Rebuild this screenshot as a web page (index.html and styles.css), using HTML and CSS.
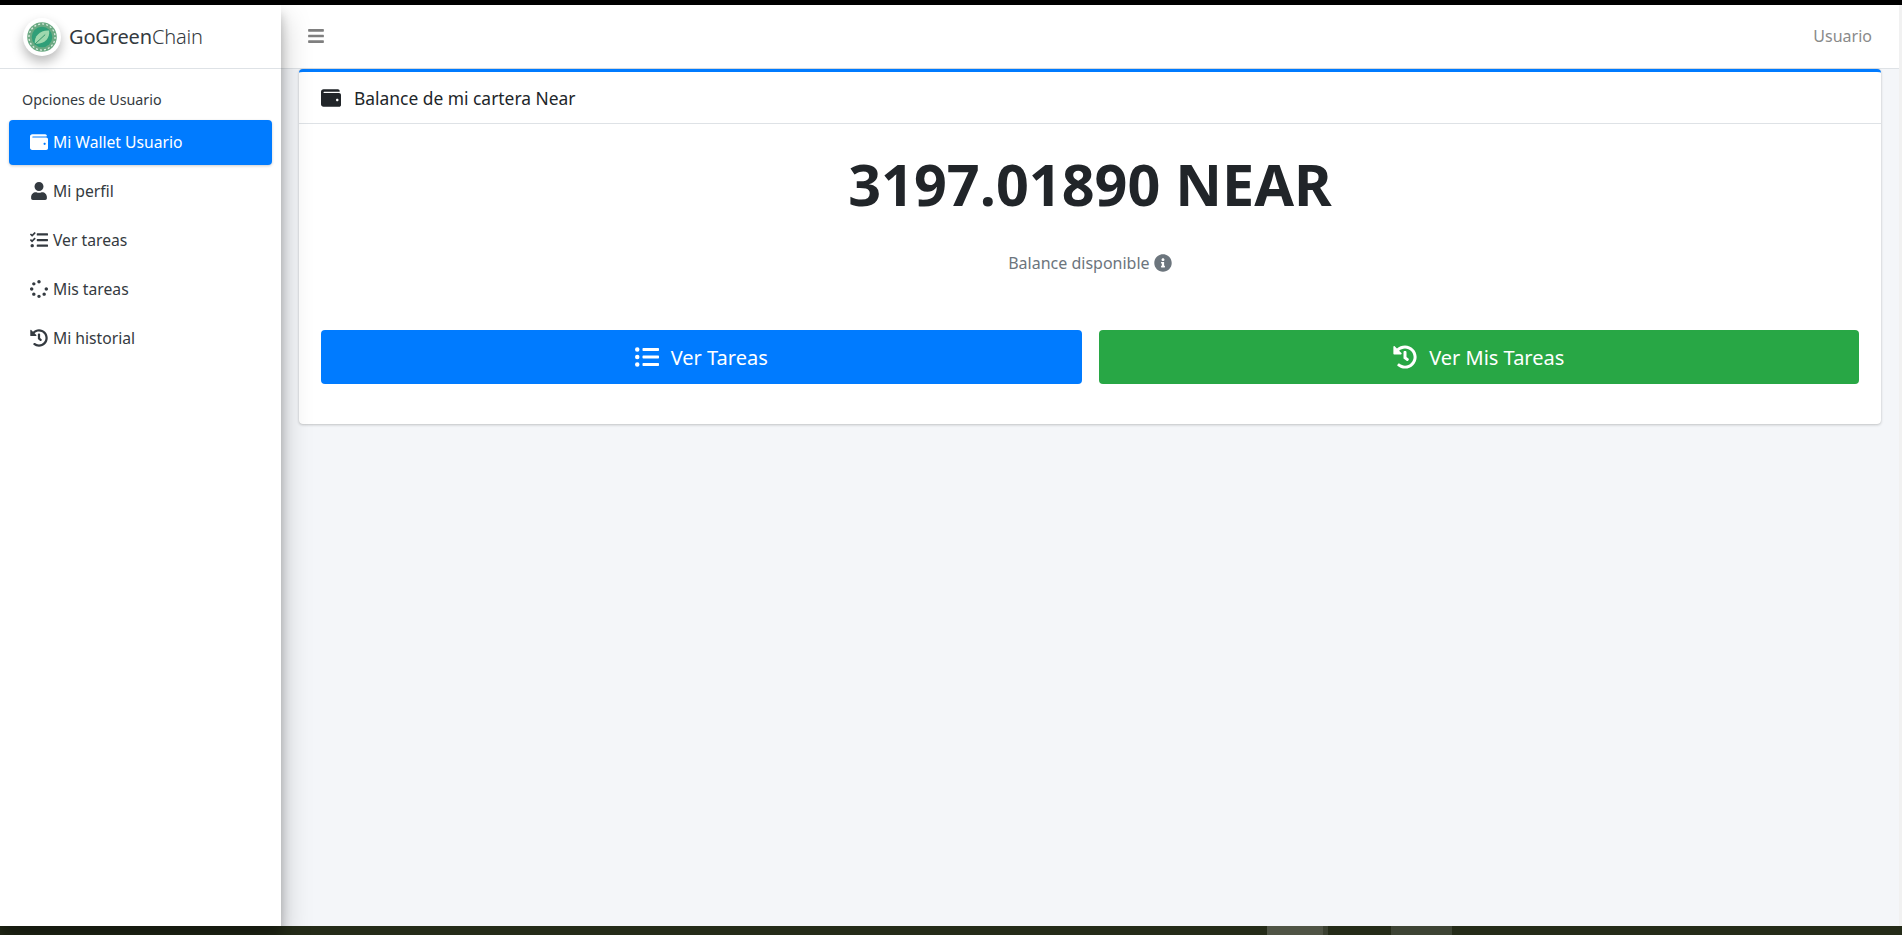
FILE: index.html
```html
<!DOCTYPE html>
<html lang="es">
<head>
    <meta charset="UTF-8">
    <meta name="viewport" content="width=device-width, initial-scale=1.0">
    <title>GoGreenChain - Mi Wallet</title>
    <link rel="stylesheet" href="styles.css">
</head>
<body>
    <svg class="icon-defs" aria-hidden="true">
        <symbol id="i-wallet" viewBox="0 0 512 512"><path d="M461.2 128H80c-8.84 0-16-7.16-16-16s7.16-16 16-16h384c8.84 0 16-7.16 16-16 0-26.51-21.49-48-48-48H64C28.65 32 0 60.65 0 96v320c0 35.35 28.65 64 64 64h397.2c28.02 0 50.8-21.53 50.8-48V176c0-26.47-22.78-48-50.8-48zM416 340c-17.67 0-32-14.33-32-32s14.33-32 32-32 32 14.33 32 32-14.33 32-32 32z"/></symbol>
        <symbol id="i-user" viewBox="0 0 448 512"><path d="M224 256c70.7 0 128-57.3 128-128S294.7 0 224 0 96 57.3 96 128s57.3 128 128 128zm89.6 32h-16.7c-22.2 10.2-46.9 16-72.9 16s-50.6-5.8-72.9-16h-16.7C60.2 288 0 348.2 0 422.4V464c0 26.5 21.5 48 48 48h352c26.5 0 48-21.5 48-48v-41.6c0-74.2-60.2-134.4-134.4-134.4z"/></symbol>
        <symbol id="i-tasks" viewBox="0 0 512 512"><path d="M139.61 35.5a12 12 0 0 0-17 0L58.93 98.81l-22.7-22.12a12 12 0 0 0-17 0L3.53 92.41a12 12 0 0 0 0 17l47.59 47.4a12.78 12.78 0 0 0 17.61 0l15.59-15.62L156.52 69a12.09 12.09 0 0 0 .09-17zm0 159.19a12 12 0 0 0-17 0l-63.68 63.72-22.7-22.1a12 12 0 0 0-17 0L3.53 252a12 12 0 0 0 0 17L51 316.5a12.77 12.77 0 0 0 17.6 0l15.7-15.69 72.2-72.22a12 12 0 0 0 .09-16.9zM64 368c-26.49 0-48.59 21.5-48.59 48S37.53 464 64 464a48 48 0 0 0 0-96zm432 16H208a16 16 0 0 0-16 16v32a16 16 0 0 0 16 16h288a16 16 0 0 0 16-16v-32a16 16 0 0 0-16-16zm0-320H208a16 16 0 0 0-16 16v32a16 16 0 0 0 16 16h288a16 16 0 0 0 16-16V80a16 16 0 0 0-16-16zm0 160H208a16 16 0 0 0-16 16v32a16 16 0 0 0 16 16h288a16 16 0 0 0 16-16v-32a16 16 0 0 0-16-16z"/></symbol>
        <symbol id="i-spinner" viewBox="0 0 512 512"><path d="M304 48c0 26.51-21.49 48-48 48s-48-21.49-48-48 21.49-48 48-48 48 21.49 48 48zm-48 368c-26.51 0-48 21.49-48 48s21.49 48 48 48 48-21.49 48-48-21.49-48-48-48zm208-208c-26.51 0-48 21.49-48 48s21.49 48 48 48 48-21.49 48-48-21.49-48-48-48zM96 256c0-26.51-21.49-48-48-48S0 229.49 0 256s21.49 48 48 48 48-21.49 48-48zm12.922 99.078c-26.51 0-48 21.49-48 48s21.49 48 48 48 48-21.49 48-48c0-26.509-21.491-48-48-48zm294.156 0c-26.51 0-48 21.49-48 48s21.49 48 48 48 48-21.49 48-48c0-26.509-21.49-48-48-48zM108.922 60.922c-26.51 0-48 21.49-48 48s21.49 48 48 48 48-21.49 48-48-21.491-48-48-48z"/></symbol>
        <symbol id="i-history" viewBox="0 0 512 512"><path d="M504 255.531c.253 136.64-111.18 248.372-247.82 248.468-59.015.042-113.223-20.53-155.822-54.911-11.077-8.94-11.905-25.541-1.839-35.607l11.267-11.267c8.609-8.609 22.353-9.551 31.891-1.984C173.062 425.135 212.781 440 256 440c101.705 0 184-82.311 184-184 0-101.705-82.311-184-184-184-48.814 0-93.149 18.969-126.068 49.932l50.754 50.754c10.08 10.08 2.941 27.314-11.313 27.314H24c-8.837 0-16-7.163-16-16V38.627c0-14.254 17.234-21.393 27.314-11.314l49.372 49.372C129.209 34.136 189.552 8 256 8c136.81 0 247.747 110.78 248 247.531zm-180.912 78.784l9.823-12.63c8.138-10.463 6.253-25.542-4.21-33.679L288 256.349V152c0-13.255-10.745-24-24-24h-16c-13.255 0-24 10.745-24 24v135.651l65.409 50.874c10.463 8.137 25.541 6.253 33.679-4.21z"/></symbol>
        <symbol id="i-info" viewBox="0 0 512 512"><path d="M256 8C119.043 8 8 119.083 8 256c0 136.997 111.043 248 248 248s248-111.003 248-248C504 119.083 392.957 8 256 8zm0 110c23.196 0 42 18.804 42 42s-18.804 42-42 42-42-18.804-42-42 18.804-42 42-42zm56 254c0 6.627-5.373 12-12 12h-88c-6.627 0-12-5.373-12-12v-24c0-6.627 5.373-12 12-12h12v-64h-12c-6.627 0-12-5.373-12-12v-24c0-6.627 5.373-12 12-12h64c6.627 0 12 5.373 12 12v100h12c6.627 0 12 5.373 12 12v24z"/></symbol>
        <symbol id="i-list" viewBox="0 0 512 512"><path d="M48 48a48 48 0 1 0 48 48 48 48 0 0 0-48-48zm0 160a48 48 0 1 0 48 48 48 48 0 0 0-48-48zm0 160a48 48 0 1 0 48 48 48 48 0 0 0-48-48zm448 16H176a16 16 0 0 0-16 16v32a16 16 0 0 0 16 16h320a16 16 0 0 0 16-16v-32a16 16 0 0 0-16-16zm0-320H176a16 16 0 0 0-16 16v32a16 16 0 0 0 16 16h320a16 16 0 0 0 16-16V80a16 16 0 0 0-16-16zm0 160H176a16 16 0 0 0-16 16v32a16 16 0 0 0 16 16h320a16 16 0 0 0 16-16v-32a16 16 0 0 0-16-16z"/></symbol>
        <symbol id="i-bars" viewBox="0 0 448 512"><path d="M16 132h416c8.837 0 16-7.163 16-16V76c0-8.837-7.163-16-16-16H16C7.163 60 0 67.163 0 76v40c0 8.837 7.163 16 16 16zm0 160h416c8.837 0 16-7.163 16-16v-40c0-8.837-7.163-16-16-16H16c-8.837 0-16 7.163-16 16v40c0 8.837 7.163 16 16 16zm0 160h416c8.837 0 16-7.163 16-16v-40c0-8.837-7.163-16-16-16H16c-8.837 0-16 7.163-16 16v40c0 8.837 7.163 16 16 16z"/></symbol>
    </svg>

    <div class="top-strip"></div>

    <div class="app">
        <aside class="sidebar">
            <div class="brand">
                <span class="brand-logo">
                    <svg viewBox="0 0 40 40" width="32" height="32">
                        <circle cx="20" cy="20" r="18.5" fill="#6aa982"/>
                        <circle cx="20" cy="20" r="16.3" fill="none" stroke="#dcebe0" stroke-width="1.6" stroke-dasharray="2.5 2.6"/>
                        <circle cx="20" cy="20" r="12.8" fill="#2f9f78"/>
                        <path d="M11 28C10 19 18 11 29 12 30 22 23 30 11 28Z" fill="#9fd8ae"/>
                        <path d="M11 29L24 17" stroke="#2f9068" stroke-width="1.2"/>
                    </svg>
                </span>
                <span class="brand-text"><span class="brand-strong">GoGreen</span>Chain</span>
            </div>
            <div class="menu-title">Opciones de Usuario</div>
            <nav class="menu">
                <a class="menu-item active"><svg class="menu-icon"><use href="#i-wallet"/></svg>Mi Wallet Usuario</a>
                <a class="menu-item"><svg class="menu-icon"><use href="#i-user"/></svg>Mi perfil</a>
                <a class="menu-item"><svg class="menu-icon"><use href="#i-tasks"/></svg>Ver tareas</a>
                <a class="menu-item"><svg class="menu-icon"><use href="#i-spinner"/></svg>Mis tareas</a>
                <a class="menu-item"><svg class="menu-icon"><use href="#i-history"/></svg>Mi historial</a>
            </nav>
        </aside>

        <div class="main">
            <header class="navbar">
                <svg class="bars-icon"><use href="#i-bars"/></svg>
                <span class="navbar-user">Usuario</span>
            </header>

            <div class="content">
                <section class="card">
                    <div class="card-header">
                        <svg class="card-icon"><use href="#i-wallet"/></svg>
                        <h2 class="card-title">Balance de mi cartera Near</h2>
                    </div>
                    <div class="card-body">
                        <div class="balance">3197.01890 NEAR</div>
                        <div class="balance-label">Balance disponible <svg class="info-icon"><use href="#i-info"/></svg></div>
                        <div class="actions">
                            <a class="btn btn-primary"><svg class="btn-icon"><use href="#i-list"/></svg>Ver Tareas</a>
                            <a class="btn btn-success"><svg class="btn-icon"><use href="#i-history"/></svg>Ver Mis Tareas</a>
                        </div>
                    </div>
                </section>
            </div>
        </div>
    </div>

    <div class="taskbar">
        <span class="task task-one"></span>
        <span class="task task-sep"></span>
        <span class="task task-two"></span>
    </div>
</body>
</html>
```

FILE: styles.css
```css
* { margin: 0; padding: 0; box-sizing: border-box; }
html, body { height: 100%; overflow: hidden; }
body { display: flex; flex-direction: column; font-family: 'Noto Sans', 'Lato', sans-serif; font-size: 15px; color: #343a40; background: #f4f6f9; }
svg { fill: currentColor; }
.icon-defs { display: none; }

.top-strip { height: 5px; background: #000; }
.app { flex: 1; display: flex; min-height: 0; background: #f1f1f1; }
.taskbar { height: 9px; background: #242b18; display: flex; padding-left: 1267px; }
.task { height: 100%; }
.task-one { width: 56px; background: #4f5445; }
.task-sep { width: 5px; background: #3a4030; margin-right: 63px; }
.task-two { width: 61px; background: #3d4434; }

.sidebar { width: 281px; background: #fff; box-shadow: 0 14px 28px rgba(0,0,0,0.25), 0 10px 10px rgba(0,0,0,0.22); position: relative; z-index: 2; }
.brand { height: 64px; display: flex; align-items: center; padding-left: 23px; border-bottom: 1px solid #dee2e6; }
.brand-logo { width: 38px; height: 38px; border-radius: 50%; background: #fff; display: flex; align-items: center; justify-content: center; box-shadow: 0 6px 12px rgba(0,0,0,0.28); margin-right: 8px; }
.brand-text { font-size: 20px; font-weight: 300; letter-spacing: -0.15px; color: #343a40; }
.brand-strong { font-weight: 400; }
.menu-title { padding: 20px 0 0 22px; font-size: 14.3px; line-height: 22px; color: #343a40; }
.menu { padding: 9px 9px 0; display: flex; flex-direction: column; }
.menu-item { height: 45px; margin-bottom: 4px; padding: 0 0 2px 20px; display: flex; align-items: center; font-size: 15.7px; border-radius: 4px; color: #343a40; }
.menu-item.active { background: #007bff; color: #fff; box-shadow: 0 1px 3px rgba(0,0,0,0.2); }
.menu-icon { width: 20px; height: 18px; margin-right: 4px; }

.main { flex: 1; display: flex; flex-direction: column; min-width: 0; margin-right: 3px; background: #f4f6f9; }
.navbar { height: 64px; background: #fff; border-bottom: 1px solid #dee2e6; display: flex; align-items: center; justify-content: space-between; padding: 0 27px 2px 27px; }
.bars-icon { width: 16px; height: 18px; color: #7f7f7f; }
.navbar-user { font-size: 16px; color: #8a8a8a; }
.content { padding: 0 18px; }

.card { background: #fff; border-top: 3px solid #007bff; border-radius: 4px; box-shadow: 0 0 1px rgba(0,0,0,0.125), 0 1px 3px rgba(0,0,0,0.2); }
.card-header { height: 52px; padding: 0 22px; display: flex; align-items: center; border-bottom: 1px solid #dee2e6; color: #212529; }
.card-icon { width: 20px; height: 20px; margin-right: 13px; }
.card-title { font-size: 17.4px; font-weight: 400; }
.card-body { padding: 24px 22px 40px; text-align: center; }
.balance { font-size: 57.5px; font-weight: 700; line-height: 72px; color: #212529; }
.balance-label { margin-top: 31px; font-size: 16px; line-height: 24px; color: #6c757d; }
.info-icon { width: 18px; height: 18px; vertical-align: -3px; }
.actions { margin-top: 55px; display: flex; gap: 17px; }
.btn { flex: 1; height: 54px; display: flex; align-items: center; justify-content: center; font-size: 20px; color: #fff; border-radius: 4px; }
.btn-primary { background: #007bff; }
.btn-success { background: #28a745; }
.btn-icon { width: 24px; height: 24px; margin-right: 12px; }
```
